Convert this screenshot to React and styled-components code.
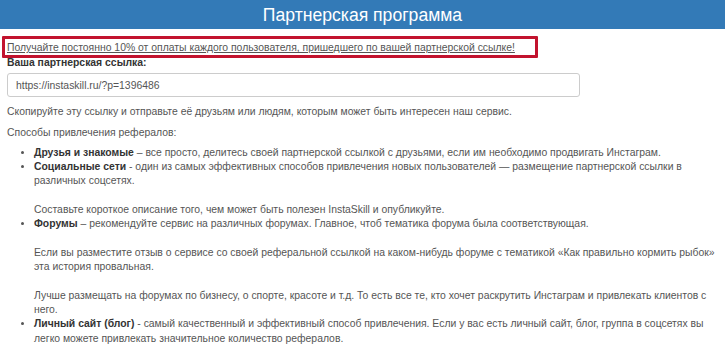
import React from 'react'
import styled, { createGlobalStyle } from 'styled-components'

const GlobalStyle = createGlobalStyle`
  body {
    margin: 0;
    background: #fff;
    font-family: "Liberation Sans", Arial, sans-serif;
    font-size: 10.4px;
    line-height: 14.3px;
    color: #555;
  }
`

const Header = styled.header`
  height: 29px;
  background: #337ab7;
  color: #fff;
  text-align: center;
  font-size: 17.6px;
  line-height: 30px;
`

const Content = styled.main`
  padding: 7px 7px 0;
`

const Highlight = styled.div`
  margin-left: -5px;
  width: 528px;
  border: 3px solid #c2132e;
  border-radius: 1px;
  padding: 2px 0 0 2px;
  line-height: 14px;
  height: 14px;

  a {
    color: #555;
    text-decoration: underline;
  }
`

const Label = styled.label`
  display: block;
  margin-top: -2px;
  font-weight: bold;
  color: #333;
`

const LinkInput = styled.input`
  display: block;
  box-sizing: border-box;
  width: 573px;
  height: 24px;
  margin: 3px 0 8px;
  padding: 0 8px;
  border: 1px solid #ccc;
  border-radius: 3px;
  font: inherit;
  color: #555;
  background: #fff;
`

const Text = styled.p`
  margin: 0 0 6px;
`

const Methods = styled.ul`
  margin: 0;
  padding-left: 27px;

  b {
    color: #333;
  }
`

const App = () => (
  <>
    <GlobalStyle />
    <Header>Партнерская программа</Header>
    <Content>
      <Highlight>
        <a href='#'>Получайте постоянно 10% от оплаты каждого пользователя, пришедшего по вашей партнерской ссылке!</a>
      </Highlight>
      <Label htmlFor='ref'>Ваша партнерская ссылка:</Label>
      <LinkInput id='ref' readOnly value='https://instaskill.ru/?p=1396486' />
      <Text>Скопируйте эту ссылку и отправьте её друзьям или людям, которым может быть интересен наш сервис.</Text>
      <Text>Способы привлечения рефералов:</Text>
      <Methods>
        <li><b>Друзья и знакомые</b> – все просто, делитесь своей партнерской ссылкой с друзьями, если им необходимо продвигать Инстаграм.</li>
        <li>
          <b>Социальные сети</b> - один из самых эффективных способов привлечения новых пользователей — размещение партнерской ссылки в различных соцсетях.
          <br /><br />
          Составьте короткое описание того, чем может быть полезен InstaSkill и опубликуйте.
        </li>
        <li>
          <b>Форумы</b> – рекомендуйте сервис на различных форумах. Главное, чтоб тематика форума была соответствующая.
          <br /><br />
          Если вы разместите отзыв о сервисе со своей реферальной ссылкой на каком-нибудь форуме с тематикой «Как правильно кормить рыбок» эта история провальная.
          <br /><br />
          Лучше размещать на форумах по бизнесу, о спорте, красоте и т.д. То есть все те, кто хочет раскрутить Инстаграм и привлекать клиентов с него.
        </li>
        <li><b>Личный сайт (блог)</b> - самый качественный и эффективный способ привлечения. Если у вас есть личный сайт, блог, группа в соцсетях вы легко можете привлекать значительное количество рефералов.</li>
      </Methods>
    </Content>
  </>
)

export default App
